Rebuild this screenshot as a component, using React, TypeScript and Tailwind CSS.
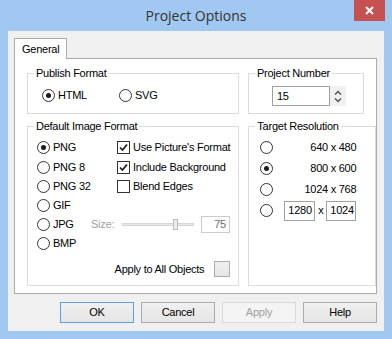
import React from "react";

interface GroupProps {
  title: string;
  className?: string;
  children: React.ReactNode;
}

const Group = ({ title, className, children }: GroupProps) => (
  <fieldset className={`border border-[#dcdcdc] ${className ?? ""}`}>
    <legend className="ml-[6px] px-[2px] leading-[14px]">{title}</legend>
    {children}
  </fieldset>
);

const Radio = ({ checked }: { checked?: boolean }) => (
  <span className="w-[13px] h-[13px] rounded-full border border-[#333333] bg-white flex items-center justify-center shrink-0">
    {checked && <span className="w-[5px] h-[5px] rounded-full bg-[#1b1b1b]" />}
  </span>
);

const RadioItem = ({
  label,
  checked,
  className,
}: {
  label: string;
  checked?: boolean;
  className?: string;
}) => (
  <div className={`flex items-center gap-[3px] ${className ?? ""}`}>
    <Radio checked={checked} />
    <span>{label}</span>
  </div>
);

const CheckItem = ({ label, checked }: { label: string; checked?: boolean }) => (
  <div className="flex items-center gap-[3px]">
    <span className="w-[13px] h-[13px] border border-[#333333] bg-white flex items-center justify-center shrink-0">
      {checked && (
        <svg width="11" height="11" viewBox="0 0 11 11">
          <path d="M2 5.5 L4.5 8 L9 2.5" stroke="#1b1b1b" strokeWidth="1.7" fill="none" />
        </svg>
      )}
    </span>
    <span>{label}</span>
  </div>
);

const Button = ({
  label,
  isDefault,
  disabled,
}: {
  label: string;
  isDefault?: boolean;
  disabled?: boolean;
}) => {
  let style = "border-[#acacac] bg-gradient-to-b from-[#f0f0f0] to-[#e5e5e5] text-black";
  if (isDefault) style = "border-[#5aa0e6] bg-gradient-to-b from-[#f0f0f0] to-[#e5e5e5] text-black";
  if (disabled) style = "border-[#d9d9d9] bg-[#f4f4f4] text-[#a0a0a0]";
  return (
    <div className={`w-[74px] h-[21px] border flex items-center justify-center ${style}`}>
      {label}
    </div>
  );
};

const Slider = () => (
  <div className="relative w-[72px] h-[13px] flex items-center">
    <div className="w-full h-[3px] bg-[#e7e7e7] border border-[#d6d6d6]" />
    <div className="absolute left-[51px] top-[1px] w-[5px] h-[11px] border border-[#bcbcbc] bg-[#ececec]" />
  </div>
);

const TextBox = ({ value, className }: { value: string; className?: string }) => (
  <div
    className={`h-[20px] border border-[#a0a0a0] bg-white flex items-center pl-[3px] ${className ?? ""}`}
  >
    {value}
  </div>
);

export default function App() {
  return (
    <div className="w-[392px] h-[339px] bg-[#a1c8f0] flex flex-col font-['Liberation_Sans',Arial,sans-serif] text-[11px] text-black tracking-[-0.25px] whitespace-nowrap relative">
      {/* title bar */}
      <div className="h-[31px] flex items-center justify-center">
        <span className="font-['Open_Sans',sans-serif] text-[14px] text-[#333333] tracking-normal">
          Project Options
        </span>
      </div>
      <div className="absolute top-0 right-[7px] w-[31px] h-[21px] bg-[#c75050] flex items-center justify-center">
        <svg width="9" height="9" viewBox="0 0 9 9">
          <path d="M1 1 L8 8 M8 1 L1 8" stroke="white" strokeWidth="2" />
        </svg>
      </div>

      {/* client area */}
      <div className="mx-[8px] h-[300px] bg-[#f0f0f0] flex flex-col pl-[6px] pr-[7px] pt-[7px]">
        <div className="flex">
          <div className="relative z-10 -mb-px h-[21px] w-[53px] border-t border-l border-r border-[#acacac] bg-white flex items-center pl-[7px]">
            General
          </div>
        </div>
        <div className="h-[236px] border border-[#acacac] bg-white pl-[12px] pt-[7px] flex flex-col gap-[5px]">
          <div className="flex gap-[9px]">
            <Group title="Publish Format" className="w-[212px] h-[48px]">
              <div className="pl-[14px] pt-[7px] flex items-center">
                <RadioItem label="HTML" checked className="w-[77px]" />
                <RadioItem label="SVG" />
              </div>
            </Group>
            <Group title="Project Number" className="w-[116px] h-[48px]">
              <div className="pl-[23px] pt-[6px] flex">
                <div className="w-[58px] h-[20px] border border-[#a0a0a0] bg-white flex items-center pl-[4px]">
                  15
                </div>
                <div className="w-[16px] h-[20px] bg-[#f0f0f0] flex flex-col items-center justify-center gap-[3px]">
                  <svg width="8" height="5" viewBox="0 0 8 5">
                    <path d="M1 4.5 L4 1.5 L7 4.5" stroke="#555555" strokeWidth="1.5" fill="none" />
                  </svg>
                  <svg width="8" height="5" viewBox="0 0 8 5">
                    <path d="M1 0.5 L4 3.5 L7 0.5" stroke="#555555" strokeWidth="1.5" fill="none" />
                  </svg>
                </div>
              </div>
            </Group>
          </div>

          <div className="flex gap-[9px]">
            <Group title="Default Image Format" className="w-[212px] h-[167px]">
              <div className="pl-[9px] pr-[8px] pt-[4px] flex flex-col">
                <div className="h-[20px] flex items-center">
                  <RadioItem label="PNG" checked className="w-[80px]" />
                  <CheckItem label="Use Picture's Format" checked />
                </div>
                <div className="h-[20px] flex items-center">
                  <RadioItem label="PNG 8" className="w-[80px]" />
                  <CheckItem label="Include Background" checked />
                </div>
                <div className="h-[19px] flex items-center">
                  <RadioItem label="PNG 32" className="w-[80px]" />
                  <CheckItem label="Blend Edges" />
                </div>
                <div className="h-[19px] flex items-center">
                  <RadioItem label="GIF" />
                </div>
                <div className="h-[19px] flex items-center">
                  <RadioItem label="JPG" className="w-[54px]" />
                  <span className="w-[31px] text-[#a0a0a0]">Size:</span>
                  <Slider />
                  <div className="ml-[7px] w-[29px] h-[17px] border border-[#cccccc] bg-white flex items-center justify-end pr-[3px] text-[#6d6d6d]">
                    75
                  </div>
                </div>
                <div className="h-[19px] flex items-center">
                  <RadioItem label="BMP" />
                </div>
                <div className="mt-[8px] h-[16px] flex items-center justify-end gap-[10px]">
                  <span>Apply to All Objects</span>
                  <span className="w-[16px] h-[16px] border border-[#adadad] bg-gradient-to-b from-[#f0f0f0] to-[#e5e5e5]" />
                </div>
              </div>
            </Group>
            <Group title="Target Resolution" className="w-[116px] h-[167px]">
              <div className="pl-[11px] pr-[19px] pt-[4px] flex flex-col">
                <div className="h-[21px] flex items-center">
                  <Radio />
                  <span className="flex-1 text-right">640 x 480</span>
                </div>
                <div className="h-[21px] flex items-center">
                  <Radio checked />
                  <span className="flex-1 text-right">800 x 600</span>
                </div>
                <div className="h-[21px] flex items-center">
                  <Radio />
                  <span className="flex-1 text-right">1024 x 768</span>
                </div>
                <div className="h-[21px] flex items-center">
                  <Radio />
                  <TextBox value="1280" className="ml-[11px] w-[31px]" />
                  <span className="w-[11px] text-center">x</span>
                  <TextBox value="1024" className="w-[30px]" />
                </div>
              </div>
            </Group>
          </div>
        </div>

        <div className="mt-[8px] flex justify-end gap-[7px]">
          <Button label="OK" isDefault />
          <Button label="Cancel" />
          <Button label="Apply" disabled />
          <Button label="Help" />
        </div>
      </div>
    </div>
  );
}
